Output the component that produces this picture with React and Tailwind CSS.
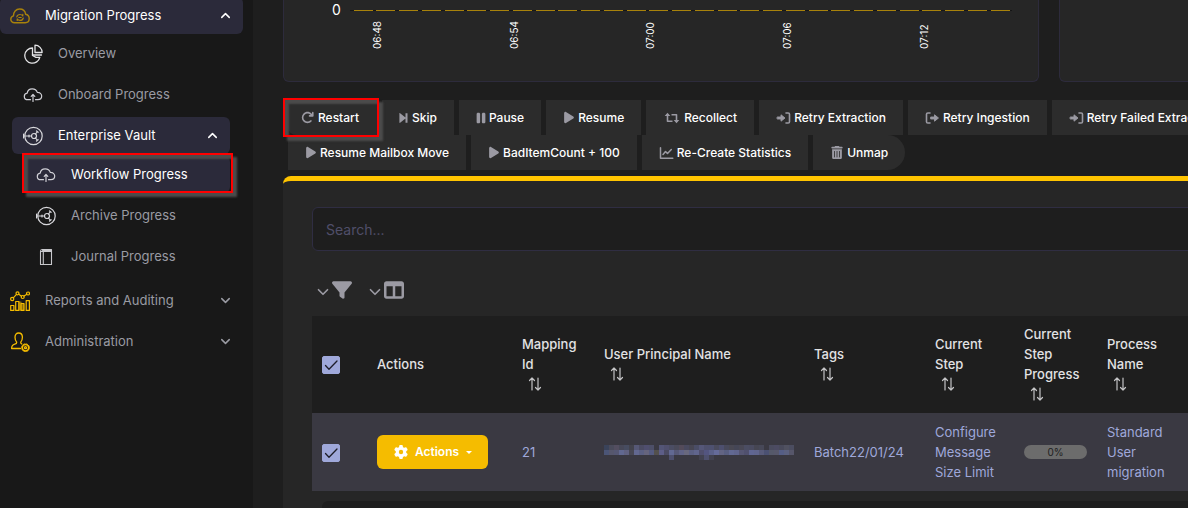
import React from "react";
import { FaFilter, FaPause, FaPlay, FaArrowRotateRight, FaGear, FaTableColumns, FaTrashCan } from "react-icons/fa6";
import { ChevronUp, ChevronDown } from "lucide-react";

const line = { fill: "none", stroke: "currentColor", strokeLinecap: "round", strokeLinejoin: "round" };

function CloudSync() {
  return (
    <svg viewBox="0 0 20 16" className="h-4 w-5 text-[#a8820b]" {...line} strokeWidth="1.4">
      <path d="M4.500 14.800C2.300 14.800.8 13.300.8 11.300c0-1.700 1.100-3 2.700-3.400C3.300 4 6 1 9.600 1c3.400 0 5.600 2.200 6 5.200 2.200.4 3.600 2.100 3.600 4.400 0 2.500-1.700 4.200-4 4.200z" />
      <path d="M6.800 8.800C7.200 7.300 8.500 6.500 10 6.500c1.200 0 2.200.5 2.800 1.500V6.400M13.300 10c-.4 1.500-1.800 2.400-3.300 2.400-1.200 0-2.200-.6-2.800-1.500v1.600M8.800 9.500h2.400" strokeWidth="1.200" />
    </svg>
  );
}
function Pie() {
  return (
    <svg viewBox="0 0 20 20" className="size-5 text-[#e4e4e6]" {...line} strokeWidth="1.300">
      <path d="M9.500 4a7.600 7.600 0 1 0 7.300 9.300H13l-3.500-1.800z" />
      <path d="M12 1.200V8.500h7.100A7.200 7.200 0 0 0 12 1.200zM9.500 11h9" />
    </svg>
  );
}
function CloudUp() {
  return (
    <svg viewBox="0 0 20 16" className="h-4 w-5 text-[#d0d0d6]" {...line} strokeWidth="1.200">
      <path d="M7.500 12.700H5C2.800 12.700 1.300 11.300 1.300 9.400c0-1.700 1.200-2.900 2.900-3.200C4.500 3.600 6.600 1.800 9.200 1.800c2.500 0 4.400 1.400 5.100 3.600 2.500-.1 4.400 1.400 4.400 3.700 0 2.100-1.600 3.600-3.800 3.600h-2.400" />
      <path d="M10 14.500V7.800M8.200 9.300 10 7.500l1.800 1.800" />
    </svg>
  );
}
function Vault() {
  return (
    <svg viewBox="0 0 20 20" className="size-5 text-[#d8d8dc]" {...line} strokeWidth="1.200">
      <circle cx="10.500" cy="10" r="8.700" />
      <circle cx="11" cy="10" r="2.500" />
      <path d="M.6 8v4M2 10h6.500M12.500 8l1.600-2M12.500 12l1.600 2M6 9v2M13.500 5l1.600 1.300M13.500 15l1.600-1.300" />
    </svg>
  );
}
function Journal() {
  return (
    <svg viewBox="0 0 20 20" className="size-5 text-[#c8c8cc]" {...line} strokeWidth="1.100">
      <path d="M4.500 4.500h11v13h-11zM4.500 4.500C4.500 3 5 2.500 6 2.500h9.500v2M7.300 4.500v13M6.500 3.500h8.500" />
    </svg>
  );
}
function Reports() {
  return (
    <svg viewBox="0 0 20 20" className="size-5 text-[#f5bc00]" {...line} strokeWidth="1.200">
      <path d="M9 11h2v8H9zM11.500 13h2v6h-2z" fill="#8f6f08" stroke="#8f6f08" />
      <path d="M.7 14.500h3.200v4.900H.7zM5.700 10.500h3.200v8.900H5.700zM11 12.500h3v6.900h-3zM16.200 9.600h3.200v9.800h-3.200z" />
      <circle cx="2.200" cy="8" r="1.600" />
      <circle cx="7.500" cy="2.300" r="1.500" />
      <circle cx="12.700" cy="6" r="1.500" />
      <circle cx="18" cy="2.500" r="1.500" />
      <path d="M3.300 6.800 6.500 3.400M8.800 3.200l2.700 2M14 5.100l2.900-1.900" />
    </svg>
  );
}
function Admin() {
  return (
    <svg viewBox="0 0 20 20" className="size-5 text-[#f5bc00]" {...line} strokeWidth="1.300">
      <path d="M10.500 16.500H1.600c0-2.800 1-3.700 3.200-4.300 1.500-.4 2-.9 1.900-2C5.500 9 5 7.300 5 5.300 5 2.600 6.400 1 8.700 1s3.700 1.600 3.700 4.300c0 2-.5 3.700-1.700 4.900 0 .9.300 1.400 1.100 1.800" />
      <circle cx="15.500" cy="15.700" r="3.100" />
      <circle cx="15.500" cy="15.700" r="1" />
      <circle cx="15.500" cy="15.700" r="3.900" strokeWidth="1" strokeDasharray="1.600 1.460" />
    </svg>
  );
}

const small = "h-3 w-[15px] text-[#9b9aa3]";
function SkipEnd() {
  return (
    <svg viewBox="0 0 10 12" className="h-3 w-[10px] text-[#9b9aa3]" fill="currentColor">
      <path d="M.4 1.500v9c0 .4.400.6.700.3L6.500 6.500v4.300h2V1.200h-2v4.300L1.100 1.200C.8.900.4 1.100.4 1.500z" />
    </svg>
  );
}
function Recollect() {
  return (
    <svg viewBox="0 0 18 12" className="h-3 w-[18px] text-[#9b9aa3]" {...line} strokeLinecap="butt" strokeWidth="1.600">
      <path d="M4.500 2v7.200h5M13.500 10V2.800h-5" />
      <path d="M1.700 4 4.500.8 7.300 4zM10.700 8l2.800 3.200L16.300 8z" fill="currentColor" stroke="none" />
    </svg>
  );
}
function Enter() {
  return (
    <svg viewBox="0 0 14 12" className={small} {...line} strokeWidth="1.600">
      <path d="M9.500 1h2.200c.8 0 1.300.5 1.300 1.300v7.400c0 .8-.5 1.300-1.300 1.300H9.500" />
      <path d="M1 5h3.500V2.800L8.500 6 4.500 9.200V7H1z" fill="currentColor" strokeWidth=".9" />
    </svg>
  );
}
function Exit() {
  return (
    <svg viewBox="0 0 14 12" className={small} {...line} strokeWidth="1.600">
      <path d="M4.500 1H2.300C1.500 1 1 1.500 1 2.300v7.400c0 .8.500 1.300 1.300 1.300h2.200" />
      <path d="M5.500 5h3.500V2.800L13 6 9 9.200V7H5.500z" fill="currentColor" strokeWidth=".9" />
    </svg>
  );
}
function Chart() {
  return (
    <svg viewBox="0 0 14 12" className={small} {...line} strokeWidth="1.500">
      <path d="M1 .8v10.400h12.300M3.500 7.500 6 4.600l2 1.800L11.800 2.500" />
    </svg>
  );
}

function NavItem({ icon, label, caret, active, top, highlight, children }) {
  const Caret = caret === "up" ? ChevronUp : ChevronDown;
  return (
    <li>
      <a
        href="#"
        className={`relative flex h-[37px] items-center gap-[15px] rounded-md pr-[10px] ${top ? "pl-[10px]" : "pl-[11px]"} ${
          active ? "bg-[#2b2a3a] text-white" : "text-[#9a9ba3]"
        }`}
      >
        {icon}
        <span className="flex-1">{label}</span>
        {caret && <Caret size={15} strokeWidth={2.4} />}
        {highlight && (
          <span className="absolute -top-[3px] -right-[3px] bottom-0 -left-[3px] border-2 border-[#f00] shadow-[4px_4px_2px_#4b4b4b,inset_4px_4px_2px_#4b4b4b]" />
        )}
      </a>
      {children}
    </li>
  );
}

function Sidebar() {
  return (
    <nav className="w-[253px] shrink-0 bg-[#181818] pr-[10px]">
      <ul className="-mt-[3px] flex flex-col gap-1">
        <NavItem icon={<CloudSync />} label="Migration Progress" caret="up" active top>
          <ul className="mt-px mr-[13px] mb-[3px] ml-3 flex flex-col gap-1">
            <NavItem icon={<Pie />} label="Overview" />
            <NavItem icon={<CloudUp />} label="Onboard Progress" />
            <NavItem icon={<Vault />} label="Enterprise Vault" caret="up" active>
              <ul className="mt-[2px] ml-[13px] flex flex-col gap-1">
                <NavItem icon={<CloudUp />} label="Workflow Progress" active highlight />
                <NavItem icon={<Vault />} label="Archive Progress" />
                <NavItem icon={<Journal />} label="Journal Progress" />
              </ul>
            </NavItem>
          </ul>
        </NavItem>
        <NavItem icon={<Reports />} label="Reports and Auditing" caret="down" top />
        <NavItem icon={<Admin />} label="Administration" caret="down" top />
      </ul>
    </nav>
  );
}

const times = ["06:48", "06:54", "07:00", "07:06", "07:12"];
const bars = Array.from({ length: 29 }, (_, i) => i);

function ProgressChart() {
  return (
    <svg width="730" height="60" className="font-[Inter,sans-serif]">
      <text x="48" y="15" fontSize="14" fill="#fff">0</text>
      <path d="M66 10.500H728" stroke="#161616" />
      {bars.map((i) => (
        <path key={i} d={`M${Math.round(69.5 + i * 22.75)} 10.500h19`} stroke="#a8820b" />
      ))}
      {times.map((t, i) => (
        <text key={t} transform={`translate(${Math.round(97 + i * 136.7)} 49) rotate(-90)`} fontSize="10" fill="#fff">
          {t}
        </text>
      ))}
    </svg>
  );
}

function ToolButton({ icon, children, first, last }) {
  return (
    <button
      type="button"
      className={`relative flex h-[35px] items-center bg-[#2c2c2c] text-[12px] font-medium whitespace-nowrap text-white ${
        first ? "z-10 gap-1 rounded-l-lg pr-[18px] pl-[13px]" : "gap-[3px] px-[17px]"
      } ${last ? "rounded-r-full" : ""}`}
    >
      {icon}
      {children}
      {first && (
        <span className="absolute -top-[2px] -right-[2px] -bottom-[2px] -left-[5px] border-2 border-[#f00] shadow-[4px_4px_2px_#4b4b4b,inset_4px_4px_2px_#4b4b4b]" />
      )}
    </button>
  );
}

function Toolbar() {
  const play = <FaPlay className="h-[13px] w-3 text-[#9b9aa3]" />;
  return (
    <div className="flex flex-wrap gap-x-[5px] pl-[5px]">
      <ToolButton first icon={<FaArrowRotateRight className="size-[13px] text-[#9b9aa3]" />}>Restart</ToolButton>
      <ToolButton icon={<SkipEnd />}>Skip</ToolButton>
      <ToolButton icon={<FaPause className="h-[14px] w-[10px] text-[#9b9aa3]" />}>Pause</ToolButton>
      <ToolButton icon={play}>Resume</ToolButton>
      <ToolButton icon={<Recollect />}>Recollect</ToolButton>
      <ToolButton icon={<Enter />}>Retry Extraction</ToolButton>
      <ToolButton icon={<Exit />}>Retry Ingestion</ToolButton>
      <ToolButton icon={<Enter />}>Retry Failed Extraction</ToolButton>
      <ToolButton icon={play}>Resume Mailbox Move</ToolButton>
      <ToolButton icon={play}>BadItemCount + 100</ToolButton>
      <ToolButton icon={<Chart />}>Re-Create Statistics</ToolButton>
      <ToolButton last icon={<FaTrashCan className="h-[13px] w-[14px] text-[#9b9aa3]" />}>Unmap</ToolButton>
    </div>
  );
}

function Check({ label }) {
  return (
    <span className="relative mt-[2px] block size-[18px]">
      <input type="checkbox" defaultChecked aria-label={label} className="peer block size-[18px] appearance-none rounded-xs border border-[#9fa8da] checked:bg-[#9fa8da]" />
      <svg viewBox="0 0 18 18" className="pointer-events-none absolute inset-0 hidden text-[#1e1e2a] peer-checked:block" {...line} strokeWidth="1.300">
        <path d="m3.500 9.500 3.500 3.800 8-8.300" />
      </svg>
    </span>
  );
}

function SortIcon() {
  return (
    <svg viewBox="0 0 14 14" className="ml-[6px] h-5 w-[14px] text-[#c4c4c6]" {...line} strokeWidth="1.200">
      <path d="M4 13V1M1.500 3.500 4 1l2.500 2.500M10 1v12M7.500 10.500 10 13l2.500-2.500" />
    </svg>
  );
}

function Head({ children, sort = true }) {
  return (
    <th scope="col" className="px-[10px] pt-[7px] pb-[9px] text-left align-middle font-medium text-[#e2e2e4]">
      {children}
      {sort && <SortIcon />}
    </th>
  );
}

const mosaic = [
  "3b4660 4f5062 5a5468 4b4c5e 4b5168 464650 5d6084 50506c 55547a 525572 3b3a44 5a5c84 56567a 50536c 4e4f60 5a5060 4d4e66 4b4a58 4e5270 5c5f86 55577a 54587c 4f5066 52557a 4c4e62 4d4c58 484a5c 4d4c5a 50526a 4f5068 4a4a58 4b4c5e 3b3a44 4e5066 51506a 4d4f62 565768 505268",
  "505c84 5e5f78 5c5f80 6b74a4 6a6c90 4c4c5a 6c74a4 646a94 706f8c 5c6490 5a5650 66689a 50506c 6c76a8 5f6286 6a6e98 74748c 646a94 6a70a0 56557a 5a5c90 646c9c 7078b0 6c6f94 606890 6c76a8 6a70a0 5e5e80 56567a 6a72a6 6a70a0 606488 50587e 5c6274 5f6076 5c6898 646c90 5e5e74",
];

function Masked() {
  return (
    <svg viewBox="0 0 190 15" className="block h-[15px] w-[190px] opacity-80" shapeRendering="crispEdges" role="img" aria-label="Hidden">
      {mosaic.map((row, y) =>
        row.split(" ").map((c, x) => <rect key={`${x}-${y}`} x={x * 5} y={y * 5} width="5" height="5" fill={`#${c}`} />)
      )}
      <path d="M65 10h5v5h-5zM100 10h5v5h-5z" fill="#54567a" />
      <path d="M95 10h5v5h-5zM105 10h5v5h-5z" fill="#454554" />
    </svg>
  );
}

function MappingTable() {
  return (
    <table className="w-full table-fixed leading-5">
      <colgroup>
        <col className="w-[55px]" />
        <col className="w-[145px]" />
        <col className="w-[82px]" />
        <col className="w-[210px]" />
        <col className="w-[121px]" />
        <col className="w-[89px]" />
        <col className="w-[83px]" />
        <col />
      </colgroup>
      <thead className="bg-[#1e1e1e]">
        <tr className="h-[97px]">
          <Head sort={false}><Check label="Select all" /></Head>
          <Head sort={false}>Actions</Head>
          <Head>Mapping Id</Head>
          <Head>User Principal Name</Head>
          <Head>Tags</Head>
          <Head>Current Step</Head>
          <Head>Current Step Progress</Head>
          <Head><span className="block w-[60px]">Process Name</span></Head>
        </tr>
      </thead>
      <tbody>
        <tr className="bg-[#3a3942] text-[#9fa8da] [&>td]:px-[10px] [&>td]:py-[9px]">
          <td><Check label="Select mapping 21" /></td>
          <td>
            <button type="button" className="flex h-[34px] w-[111px] items-center justify-center gap-[7px] rounded-md bg-[#f5bc00] pl-px text-[12px] font-semibold text-white">
              <FaGear className="size-[14px]" />
              <span>Actions</span>
              <span className="border-x-[3px] border-t-[3px] border-x-transparent border-t-white" />
            </button>
          </td>
          <td>21</td>
          <td><Masked /></td>
          <td>Batch22/01/24</td>
          <td>Configure Message Size Limit</td>
          <td>
            <div className="h-[14px] rounded-full bg-[#6c6c6c] text-center text-[10px] leading-[14px] text-[#1e1e1e]">0%</div>
          </td>
          <td><span className="block w-[60px]">Standard User migration</span></td>
        </tr>
      </tbody>
    </table>
  );
}

export default function App() {
  return (
    <div className="flex h-screen overflow-hidden bg-[#1e1e1e] font-[Inter,sans-serif] text-[13px] text-white">
      <Sidebar />
      <main className="min-w-0 flex-1 overflow-hidden pl-[30px]">
        <div className="flex min-w-[1015px] flex-col">
          <div className="grid grid-cols-[19fr_6fr] gap-5">
            <section className="h-[82px] overflow-hidden rounded-b-md border border-t-0 border-[#2d2b3c] bg-[#262626]">
              <ProgressChart />
            </section>
            <section className="h-[82px] rounded-b-md border border-t-0 border-[#2d2b3c] bg-[#262626]" />
          </div>
          <div className="mt-[18px]">
            <Toolbar />
          </div>
          <section className="mt-[6px] rounded-t-lg border-t-[5px] border-[#ffc400] bg-[#262626] px-[29px] pt-[26px]">
            <input
              type="search"
              aria-label="Search"
              placeholder="Search..."
              className="block h-11 w-full rounded-md border border-[#2f2d42] bg-[#1e1e1e] px-[13px] text-[14px] text-white placeholder:text-[#504e69]"
            />
            <div className="mt-[30px] mb-[17px] flex h-[18px] gap-[14px] pl-[2px] text-[#9b9aa3]">
              <button type="button" aria-label="Filter" className="flex items-center">
                <ChevronDown size={18} strokeWidth={2.25} className="mt-1" />
                <FaFilter size={20} />
              </button>
              <button type="button" aria-label="Columns" className="flex items-center">
                <ChevronDown size={18} strokeWidth={2.25} className="mt-1" />
                <FaTableColumns size={20} />
              </button>
            </div>
            <MappingTable />
            <div className="mt-[10px] ml-[10px] h-10 rounded-md bg-[#1e1e1e]" />
          </section>
        </div>
      </main>
    </div>
  );
}
